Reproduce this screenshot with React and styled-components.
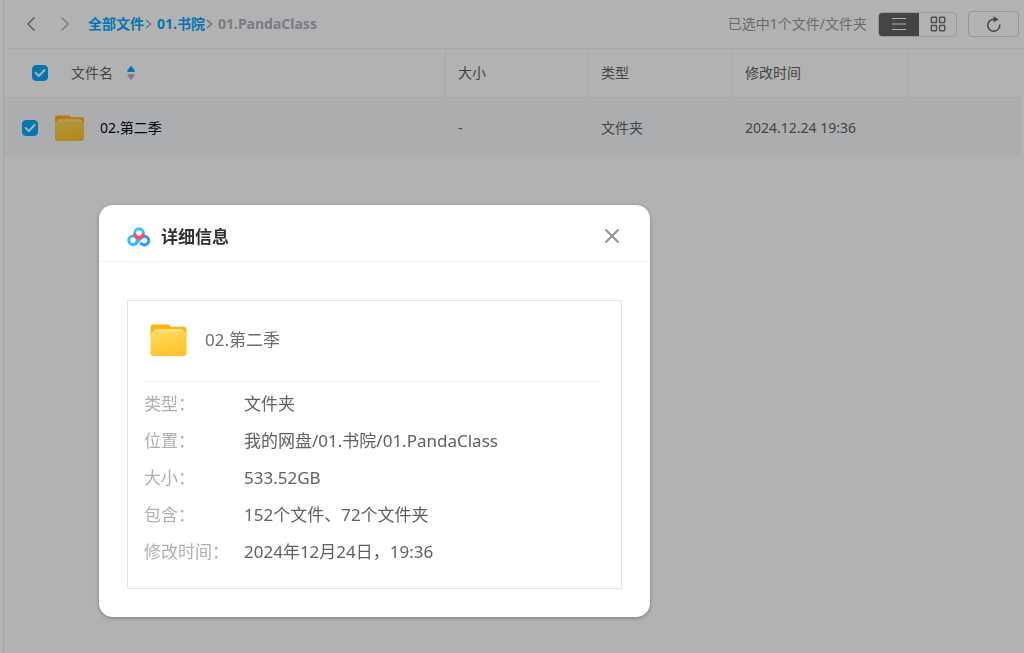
import React, { useState } from 'react';
import styled, { createGlobalStyle } from 'styled-components';

const GlobalStyle = createGlobalStyle`
  * {
    box-sizing: border-box;
  }

  body {
    margin: 0;
    background: #fff;
    color: #636363;
    font-family: 'Noto Sans', 'Noto Sans CJK SC', sans-serif;
    font-size: 14px;
    line-height: 20px;
  }

  button {
    padding: 0;
    border: none;
    background: none;
    color: inherit;
    font: inherit;
    cursor: pointer;
  }
`;

const Page = styled.div`
  min-height: 100vh;
  margin-left: 3px;
  border-left: 1px solid #eaecef;
`;

const Toolbar = styled.header`
  display: flex;
  align-items: center;
  height: 49px;
  padding: 0 5px 0 22px;
  border-bottom: 1px solid #f3f4f7;
`;

const NavButton = styled.button`
  display: flex;
  margin-right: 24px;
  color: ${props => props.$muted ? '#b8b8b8' : '#8c8c8c'};

  & + & {
    margin-right: 18px;
  }
`;

const Breadcrumb = styled.nav`
  display: flex;
  align-items: center;
  flex: 1;
  font-weight: 700;
`;

const Crumb = styled.a`
  color: #09aaff;
  text-decoration: none;
`;

const CurrentCrumb = styled.span`
  color: #afb3bf;
`;

const CrumbArrow = styled.svg`
  margin: 0 5px 0 1px;
  color: #a0a0a0;
`;

const Selection = styled.span`
  margin-right: 11px;
  color: #999;
`;

const ViewToggle = styled.div`
  display: flex;
  height: 25px;
  margin-right: 11px;
  border: 1px solid #dcdcdc;
  border-radius: 4px;
  overflow: hidden;
`;

const ViewButton = styled.button`
  display: flex;
  align-items: center;
  justify-content: center;
  width: ${props => props.$active ? '40px' : '37px'};
  background: ${props => props.$active ? '#626262' : '#fff'};
  color: ${props => props.$active ? '#fff' : '#707070'};
`;

const RefreshButton = styled.button`
  display: flex;
  align-items: center;
  justify-content: center;
  width: 51px;
  height: 26px;
  border: 1px solid #d8d8d8;
  border-radius: 4px;
`;

const TableArea = styled.main`
  padding-right: 3px;
`;

const FileTable = styled.table`
  width: 100%;
  border-collapse: separate;
  border-spacing: 0;
  table-layout: fixed;
`;

const HeadCell = styled.th`
  width: ${props => props.$width || 'auto'};
  height: 49px;
  padding: 0 0 0 12px;
  border-right: 1px solid #f0f1f4;
  border-bottom: 1px solid #f0f1f4;
  font-weight: 400;
  text-align: left;

  &:last-child {
    border-right: none;
  }
`;

const Cell = styled.td`
  height: 59px;
  padding: 0 0 0 12px;
  background: #f5f8fb;
`;

const NameHead = styled.div`
  display: flex;
  align-items: center;
  padding-left: 16px;
`;

const NameCell = styled.div`
  display: flex;
  align-items: center;
  padding-left: 6px;
`;

const SortButton = styled.button`
  display: flex;
  align-items: center;
  gap: 14px;
  margin-left: 23px;
`;

const FileName = styled.a`
  margin-left: 16px;
  color: #03081a;
  text-decoration: none;
`;

const CheckWrap = styled.span`
  display: grid;

  & > * {
    grid-area: 1 / 1;
  }

  svg {
    pointer-events: none;
  }
`;

const CheckInput = styled.input`
  appearance: none;
  width: 16px;
  height: 16px;
  margin: 0;
  border: 1px solid #c8cad3;
  border-radius: 4px;
  cursor: pointer;

  &:checked {
    border-color: #09aaff;
    background: #09aaff;
  }
`;

const FolderSvg = styled.svg`
  display: block;
  margin-left: ${props => props.$inset};
`;

const Overlay = styled.div`
  position: fixed;
  inset: 0;
  padding: 205px 0 0 99px;
  background: rgba(0, 0, 0, 0.3);
  overflow: auto;
`;

const Dialog = styled.section`
  width: 551px;
  max-width: 100%;
  border-radius: 14px;
  background: #fff;
  box-shadow: 0 1px 4px rgba(0, 0, 0, 0.3);
  font-size: 17px;
  line-height: 24px;
`;

const DialogHeader = styled.header`
  display: flex;
  align-items: center;
  height: 57px;
  padding: 8px 30px 0 28px;
  border-bottom: 1px solid #f3f5fa;
`;

const DialogTitle = styled.h2`
  flex: 1;
  margin: 0 0 0 10px;
  color: #303133;
  font-size: 17px;
  font-weight: 700;
`;

const CloseButton = styled.button`
  display: flex;
  color: #8f9194;
`;

const DialogBody = styled.div`
  padding: 38px 28px 28px;
`;

const Card = styled.div`
  padding: 0 19px 18px 16px;
  border: 1px solid #e3e4e6;
`;

const CardHeader = styled.div`
  display: flex;
  align-items: center;
  gap: 18px;
  height: 81px;
  padding-bottom: 2px;
  border-bottom: 1px solid #f1f2f4;
  color: #6b6c6f;
`;

const DetailList = styled.dl`
  margin: 3px 0 0;
`;

const DetailRow = styled.div`
  display: flex;
  align-items: center;
  height: 37px;
`;

const DetailLabel = styled.dt`
  width: 100px;
  color: #afafaf;
`;

const DetailValue = styled.dd`
  margin: 0;
  color: #5f6063;
`;

const Chevron = ({ flip }) => (
  <svg width="10" height="16" viewBox="0 0 10 16" fill="none" stroke="currentColor" strokeWidth="1.6">
    <path d={flip ? 'M1.5 1.5L8 8l-6.5 6.5' : 'M8.5 1.5L2 8l6.5 6.5'} />
  </svg>
);

const Separator = () => (
  <CrumbArrow width="7" height="10" viewBox="0 0 7 10" fill="none" stroke="currentColor" strokeWidth="1.3">
    <path d="M1 1l4.6 4L1 9" />
  </CrumbArrow>
);

const Checkbox = ({ label, checked, onChange }) => (
  <CheckWrap>
    <CheckInput type="checkbox" aria-label={label} checked={checked} onChange={onChange} />
    {checked && (
      <svg width="16" height="16" viewBox="0 0 16 16" fill="none" stroke="#fff" strokeWidth="1.9" strokeLinecap="round" strokeLinejoin="round">
        <path d="M3.6 7.8l3.2 3.2 5.8-6" />
      </svg>
    )}
  </CheckWrap>
);

const Folder = ({ id, width, height, inset }) => (
  <FolderSvg width={width} height={height} viewBox="0 0 36 32" $inset={inset}>
    <defs>
      <linearGradient id={id} x1="0" y1="0" x2="0.3" y2="1">
        <stop offset="0" stopColor="#ffdc62" />
        <stop offset="1" stopColor="#ffc52e" />
      </linearGradient>
      <linearGradient id={`${id}-edge`} x1="0" y1="0" x2="0" y2="1">
        <stop offset="0" stopColor="#fff0b8" />
        <stop offset="1" stopColor="#ffdc62" />
      </linearGradient>
    </defs>
    <path fill="#ffb310" d="M3 0.5h14c1.2 0 1.7.3 2.4 1.2.7.9 1.2 1.1 2.3 1.1H33c2 0 3 1 3 3V12H0V3.5c0-2 1-3 3-3z" />
    <path fill={`url(#${id})`} d="M0 8.5c2.2-.2 3-.8 3.4-2C3.7 5.7 4.3 5.5 5 5.5h26c.8 0 1.4.3 1.7 1 .4 1.2 1.1 1.8 3.3 2V29c0 2-1 3-3 3H3c-2 0-3-1-3-3z" />
    <path fill={`url(#${id}-edge)`} d="M5 5.5h26c.8 0 1.4.3 1.7 1l.5 1.5H3l.5-1.5c.3-.7.8-1 1.5-1z" />
  </FolderSvg>
);

const SortIcon = () => (
  <svg width="8" height="14" viewBox="0 0 8 14">
    <path fill="#09aaff" d="M3.3.4a.9.9 0 0 1 1.4 0l2.9 4c.6.8.2 1.6-.7 1.6H1.100C.2 6-.2 5.200.4 4.400z" />
    <path fill="#afb3bf" d="M3.3 13.400a.9.9 0 0 0 1.4 0l2.700-3.600c.6-.8.2-1.500-.7-1.500H1.300c-.9 0-1.300.7-.7 1.500z" />
  </svg>
);

const ListIcon = () => (
  <svg width="16" height="14" viewBox="0 0 16 14" fill="none" stroke="currentColor" strokeWidth="1.2">
    <path d="M1 1.5h14M1 7h14M1 12.5h14" />
  </svg>
);

const GridIcon = () => (
  <svg width="16" height="16" viewBox="0 0 16 16" fill="none" stroke="currentColor" strokeWidth="1.4">
    <rect x="1.3" y="1.3" width="5.2" height="5.2" rx="0.6" />
    <rect x="9.5" y="1.3" width="5.2" height="5.2" rx="0.6" />
    <rect x="1.3" y="9.5" width="5.2" height="5.2" rx="0.6" />
    <rect x="9.5" y="9.5" width="5.2" height="5.2" rx="0.6" />
  </svg>
);

const RefreshIcon = () => (
  <svg width="16" height="16" viewBox="0 0 16 16">
    <path d="M8.5 3.3A6 6 0 1 0 13.700 8.500" fill="none" stroke="currentColor" strokeWidth="1.5" />
    <path d="M7.5.2l5.2 3.2-5.2 2.800z" fill="currentColor" />
  </svg>
);

const CloudLogo = () => (
  <svg width="24" height="20" viewBox="0 0 24 20" fill="none" strokeWidth="3" strokeLinecap="round">
    <defs>
      <linearGradient id="logo-left" x1="0" y1="0" x2="1" y2="0">
        <stop offset="0" stopColor="#25c4fb" />
        <stop offset="1" stopColor="#4bbcff" />
      </linearGradient>
    </defs>
    <circle cx="6" cy="13.3" r="4.3" stroke="url(#logo-left)" />
    <path d="M14.2 16.5a4.3 4.3 0 1 0 .6-6.300" stroke="#1d9bff" />
    <path d="M9 16.300c2.100-2 3.800-4.300 6-6" stroke="#3cb4ff" />
    <circle cx="12" cy="6.2" r="4.4" stroke="#35c5fb" />
    <path d="M7.900 7.800a4.400 4.400 0 0 0 8.200 0" stroke="#ff4b6c" strokeWidth="3.400" />
  </svg>
);

const CloseIcon = () => (
  <svg width="16" height="16" viewBox="0 0 16 16" fill="none" stroke="currentColor" strokeWidth="2" strokeLinecap="round">
    <path d="M2 1l12 12M14 1L2 13" />
  </svg>
);

const details = [
  { label: '类型：', value: '文件夹' },
  { label: '位置：', value: '我的网盘/01.书院/01.PandaClass' },
  { label: '大小：', value: '533.52GB' },
  { label: '包含：', value: '152个文件、72个文件夹' },
  { label: '修改时间：', value: '2024年12月24日，19:36' },
];

const DetailDialog = ({ onClose }) => (
  <Overlay>
    <Dialog role="dialog" aria-labelledby="detail-title">
      <DialogHeader>
        <CloudLogo />
        <DialogTitle id="detail-title">详细信息</DialogTitle>
        <CloseButton aria-label="关闭" onClick={onClose}>
          <CloseIcon />
        </CloseButton>
      </DialogHeader>
      <DialogBody>
        <Card>
          <CardHeader>
            <Folder id="folder-large" width="37" height="32" inset="6px" />
            <span>02.第二季</span>
          </CardHeader>
          <DetailList>
            {details.map(item => (
              <DetailRow key={item.label}>
                <DetailLabel>{item.label}</DetailLabel>
                <DetailValue>{item.value}</DetailValue>
              </DetailRow>
            ))}
          </DetailList>
        </Card>
      </DialogBody>
    </Dialog>
  </Overlay>
);

const App = () => {
  const [checked, setChecked] = useState(true);
  const [view, setView] = useState('list');
  const [open, setOpen] = useState(true);

  const toggle = () => setChecked(!checked);

  return (
    <>
      <GlobalStyle />
      <Page lang="zh-CN">
        <Toolbar>
          <NavButton aria-label="后退">
            <Chevron />
          </NavButton>
          <NavButton aria-label="前进" $muted>
            <Chevron flip />
          </NavButton>
          <Breadcrumb>
            <Crumb href="#all">全部文件</Crumb>
            <Separator />
            <Crumb href="#shuyuan">01.书院</Crumb>
            <Separator />
            <CurrentCrumb>01.PandaClass</CurrentCrumb>
          </Breadcrumb>
          {checked && <Selection>已选中1个文件/文件夹</Selection>}
          <ViewToggle>
            <ViewButton aria-label="列表" $active={view === 'list'} onClick={() => setView('list')}>
              <ListIcon />
            </ViewButton>
            <ViewButton aria-label="网格" $active={view === 'grid'} onClick={() => setView('grid')}>
              <GridIcon />
            </ViewButton>
          </ViewToggle>
          <RefreshButton aria-label="刷新">
            <RefreshIcon />
          </RefreshButton>
        </Toolbar>

        <TableArea>
          <FileTable>
            <thead>
              <tr>
                <HeadCell>
                  <NameHead>
                    <Checkbox label="全选" checked={checked} onChange={toggle} />
                    <SortButton>
                      文件名
                      <SortIcon />
                    </SortButton>
                  </NameHead>
                </HeadCell>
                <HeadCell $width="143px">大小</HeadCell>
                <HeadCell $width="144px">类型</HeadCell>
                <HeadCell $width="175px">修改时间</HeadCell>
                <HeadCell $width="113px" />
              </tr>
            </thead>
            <tbody>
              <tr>
                <Cell>
                  <NameCell>
                    <Checkbox label="02.第二季" checked={checked} onChange={toggle} />
                    <Folder id="folder-small" width="29" height="26" inset="17px" />
                    <FileName href="#season2">02.第二季</FileName>
                  </NameCell>
                </Cell>
                <Cell>-</Cell>
                <Cell>文件夹</Cell>
                <Cell>2024.12.24 19:36</Cell>
                <Cell />
              </tr>
            </tbody>
          </FileTable>
        </TableArea>
      </Page>
      {open && <DetailDialog onClose={() => setOpen(false)} />}
    </>
  );
};

export default App;
